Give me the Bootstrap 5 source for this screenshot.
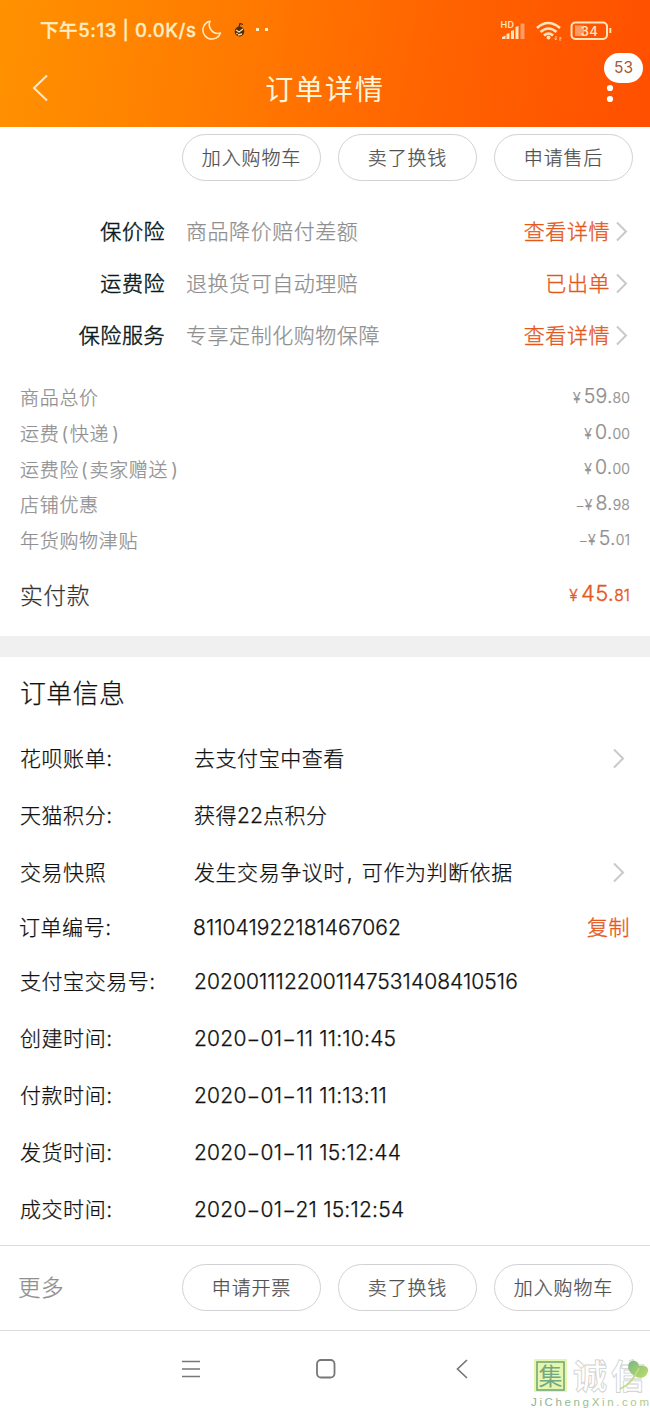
<!DOCTYPE html>
<html lang="zh-CN">
<head>
<meta charset="utf-8">
<meta name="viewport" content="width=device-width, initial-scale=1">
<title>订单详情</title>
<link href="https://cdn.jsdelivr.net/npm/bootstrap@5.3.0/dist/css/bootstrap.min.css" rel="stylesheet">
<style>
body{font-family:Inter,"Noto Sans CJK SC",sans-serif;font-size:21px;line-height:1.2;color:#111;background:#fff;width:650px;height:1408px;overflow:hidden;letter-spacing:.55px;font-weight:300;-webkit-text-stroke:.25px}
.cn{font-family:"Noto Sans CJK SC",sans-serif}
svg{display:block;flex:none;-webkit-text-stroke:0}
.topbar{height:127px;background:linear-gradient(100deg,#ff9200 0%,#ff7900 38%,#ff6200 68%,#ff4f00 100%);color:#fff5dc;-webkit-text-stroke:0}
.status{height:60px;padding:0 38px 0 40px;font-size:18.5px;font-weight:500;letter-spacing:.6px;color:#ffedc4;-webkit-text-stroke:.3px}
.titlebar{height:58px}
.titlebar h1{font-size:28px;letter-spacing:1.9px;font-weight:400}
.count{left:604px;top:53px;width:39px;height:30px;background:#fff;color:#a65a32;font-size:15.5px;font-weight:400;letter-spacing:0}
.pill{width:139px;height:47px;border:1px solid #d2d2d4;border-radius:24px;font-size:19px;letter-spacing:.85px;color:#505050;background:#fff;padding-top:3px}
.svc{height:52px}
.svc .name{width:165px;color:#0b1a20;-webkit-text-stroke:.5px}
.svc .desc{padding-left:21px}
.gray{color:#8f8f8f}
.org{color:#e4581c;-webkit-text-stroke:.35px}
.fee{height:35.6px;font-size:19px;letter-spacing:.7px;color:#8f8f8f}
.fee>span:first-child{padding-top:4px}
.lp{margin:0 1px 0 2px}.rp{margin-left:3px}
.price{font-family:Inter,sans-serif;font-size:14px;letter-spacing:.1px;padding-bottom:2px}
.price b{font-weight:300;font-size:19.5px;letter-spacing:.2px;margin-left:-1px}
.total{height:75px;margin-bottom:3px;font-size:22.8px;color:#333}
.total .price{font-size:15.5px;padding-bottom:5px}.total .price b{font-size:22px}
.band{height:21px;background:#f0f0f0}
.info{height:57.2px;padding-left:20px}
.info .key{width:174px}
.comma{display:inline-block;width:17px;padding-left:2px;letter-spacing:0}
.d{letter-spacing:.05px}
.t{letter-spacing:.22px}
.tools{height:86px;border-top:1px solid #dedede;border-bottom:1px solid #dedede}
.sysnav{height:77px;padding:0 179px 0 181px}
.wm{right:0;bottom:0;width:120px;height:52px;opacity:.9}
</style>
</head>
<body class="position-relative">
<header class="topbar position-relative">
  <div class="status d-flex align-items-center">
    <span class="text-nowrap">下午5:13 | 0.0K/s</span>
    <svg class="ms-1" width="21" height="22" viewBox="0 0 21 22" fill="none" stroke="#ffedc4" stroke-width="1.5"><path d="M9 2.2A9 9 0 1 0 19.4 14A8.7 8.7 0 0 1 9 2.2Z" stroke-linejoin="round"/></svg>
    <svg class="ms-2" width="46" height="22" viewBox="0 0 46 22"><ellipse cx="9.5" cy="12.500" rx="4.800" ry="5" fill="#4b2d11"/><path d="M6 11l3 2 4-3M8 16l4-1M6.500 14l1 1" stroke="#ffdca0" stroke-width="1.3" fill="none"/><path d="M9 8l1-3.500 3 1" stroke="#4b2d11" stroke-width="1.3" fill="none"/><path d="M26 9h3v3h-3zM35 9h3v3h-3z" fill="#ffedc4"/></svg>
    <svg class="ms-auto" width="112" height="26" viewBox="500 16 112 26">
      <text x="500.500" y="26.500" font-family="Inter" font-size="9" font-weight="600" letter-spacing=".3" fill="#ffe4bd">HD</text>
      <path fill="#ffe4bd" d="M502 38v-2l3.500-1.500V38zM506.500 38v-5l3-1v6zM511 38v-8l3-1v9zM515.500 38V26l3-1v13z"/><path d="M520.500 38V22.500h4V38z" fill="#ff9b65"/>
      <g fill="none" stroke="#ffe4bd" stroke-width="2.6"><path d="M537 27q11-10 23 0M540.500 31q8-7 16 0M544 34.500q4.500-4 9 0"/></g><circle cx="548.500" cy="36.500" r="2" fill="#ffe4bd"/>
      <path d="M556 35v4l-1.500-1.500M560 40v-4l1.500 1.500" stroke="#ffc99a" fill="none"/>
      <rect x="571.500" y="21.500" width="35.500" height="16.500" rx="4" fill="none" stroke="#ffe4bd" stroke-width="2"/><rect x="575" y="24.500" width="9" height="10.500" fill="#ff9b65"/><path d="M610.300 27v5" stroke="#ffe4bd" stroke-width="2"/>
      <text x="589.500" y="34.500" text-anchor="middle" font-family="Inter" font-size="13" font-weight="500" fill="#ffe9c9" letter-spacing=".3">34</text>
    </svg>
  </div>
  <div class="titlebar d-flex align-items-center justify-content-between">
    <svg width="60" height="40" viewBox="0 0 60 40" fill="none" stroke="#ffe9c9" stroke-width="2"><path d="M47 6.500L34 19 47 31.500"/></svg>
    <h1 class="m-0 cn">订单详情</h1>
    <svg width="60" height="40" viewBox="0 0 60 40" fill="#fff"><circle cx="20" cy="19" r="3.100"/><circle cx="20" cy="30" r="3.100"/></svg>
  </div>
  <span class="count position-absolute rounded-pill d-flex align-items-center justify-content-center">53</span>
</header>
<main>
  <div class="d-flex justify-content-end" style="gap:17px;padding:7px 17px 25px 0">
    <div class="pill d-flex align-items-center justify-content-center">加入购物车</div><div class="pill d-flex align-items-center justify-content-center">卖了换钱</div><div class="pill d-flex align-items-center justify-content-center">申请售后</div>
  </div>
  <section>
    <div class="svc d-flex align-items-center"><span class="name text-end">保价险</span><span class="gray desc">商品降价赔付差额</span><span class="org ms-auto">查看详情</span><svg width="40" height="24" viewBox="0 0 40 24" fill="none" stroke="#c9c9cc" stroke-width="2"><path d="M7 2.500l9 9-9 9"/></svg></div>
    <div class="svc d-flex align-items-center"><span class="name text-end">运费险</span><span class="gray desc">退换货可自动理赔</span><span class="org ms-auto">已出单</span><svg width="40" height="24" viewBox="0 0 40 24" fill="none" stroke="#c9c9cc" stroke-width="2"><path d="M7 2.500l9 9-9 9"/></svg></div>
    <div class="svc d-flex align-items-center"><span class="name text-end">保险服务</span><span class="gray desc">专享定制化购物保障</span><span class="org ms-auto">查看详情</span><svg width="40" height="24" viewBox="0 0 40 24" fill="none" stroke="#c9c9cc" stroke-width="2"><path d="M7 2.500l9 9-9 9"/></svg></div>
  </section>
  <section style="padding:18px 20px 0">
    <div class="fee d-flex align-items-center justify-content-between"><span>商品总价</span><span class="price">¥ <b>59.</b>80</span></div>
    <div class="fee d-flex align-items-center justify-content-between"><span>运费<span class="lp">(</span>快递<span class="rp">)</span></span><span class="price">¥ <b>0.</b>00</span></div>
    <div class="fee d-flex align-items-center justify-content-between"><span>运费险<span class="lp">(</span>卖家赠送<span class="rp">)</span></span><span class="price">¥ <b>0.</b>00</span></div>
    <div class="fee d-flex align-items-center justify-content-between"><span>店铺优惠</span><span class="price">−¥ <b>8.</b>98</span></div>
    <div class="fee d-flex align-items-center justify-content-between"><span>年货购物津贴</span><span class="price">−¥ <b>5.</b>01</span></div>
    <div class="total d-flex align-items-center justify-content-between"><span>实付款</span><span class="price org">¥ <b>45.</b>81</span></div>
  </section>
  <div class="band"></div>
  <section>
    <div class="d-flex align-items-center" style="height:73px;padding:2px 0 0 20px;font-size:25.800px">订单信息</div>
    <div class="info d-flex align-items-center"><span class="key">花呗账单:</span><span>去支付宝中查看</span><svg class="ms-auto" width="40" height="24" viewBox="0 0 40 24" fill="none" stroke="#c9c9cc" stroke-width="2"><path d="M4 2.500l9 9-9 9"/></svg></div>
    <div class="info d-flex align-items-center"><span class="key">天猫积分:</span><span>获得<span class="d">22</span>点积分</span></div>
    <div class="info d-flex align-items-center"><span class="key">交易快照</span><span>发生交易争议时<span class="comma">,</span>可作为判断依据</span><svg class="ms-auto" width="40" height="24" viewBox="0 0 40 24" fill="none" stroke="#c9c9cc" stroke-width="2"><path d="M4 2.500l9 9-9 9"/></svg></div>
    <div class="info d-flex align-items-center" style="height:51.500px;padding-left:19px"><span class="key">订单编号:</span><span class="d">811041922181467062</span><span class="org ms-auto" style="padding-right:20px">复制</span></div>
    <div class="info d-flex align-items-center" style="height:56.500px"><span class="key">支付宝交易号:</span><span class="d">2020011122001147531408410516</span></div>
    <div class="info d-flex align-items-center"><span class="key">创建时间:</span><span class="t">2020−01−11 11:10:45</span></div>
    <div class="info d-flex align-items-center"><span class="key">付款时间:</span><span class="t">2020−01−11 11:13:11</span></div>
    <div class="info d-flex align-items-center"><span class="key">发货时间:</span><span class="t">2020−01−11 15:12:44</span></div>
    <div class="info d-flex align-items-center"><span class="key">成交时间:</span><span class="t">2020−01−21 15:12:54</span></div>
  </section>
</main>
<footer style="padding-top:6.600px">
  <div class="tools d-flex align-items-center" style="gap:17px;padding:0 17px 0 18px"><span class="gray me-auto" style="font-size:22.500px">更多</span>
    <div class="pill d-flex align-items-center justify-content-center">申请开票</div><div class="pill d-flex align-items-center justify-content-center">卖了换钱</div><div class="pill d-flex align-items-center justify-content-center">加入购物车</div>
  </div>
  <nav class="sysnav d-flex align-items-center justify-content-between">
    <svg width="20" height="20" viewBox="0 0 20 20" stroke="#777" stroke-width="1.7"><path d="M1 2.500h18M1 10h18M1 17.500h18"/></svg>
    <svg width="20" height="20" viewBox="0 0 20 20" fill="none" stroke="#777" stroke-width="1.800"><rect x="1" y="1" width="17.500" height="17.500" rx="4"/></svg>
    <svg width="20" height="20" viewBox="0 0 20 20" fill="none" stroke="#777" stroke-width="1.700"><path d="M16 1L6.500 10l9.500 9"/></svg>
  </nav>
</footer>
<svg class="wm position-absolute" viewBox="530 1356 120 52">
  <defs><linearGradient id="g1"><stop stop-color="#73a98a"/><stop offset="1" stop-color="#a9c77b"/></linearGradient><linearGradient id="g2" x2="1" y2="1"><stop stop-color="#6fae7c"/><stop offset="1" stop-color="#b5dd54"/></linearGradient></defs>
  <rect x="534" y="1359" width="33" height="33" fill="#e4f6a5"/><rect x="537" y="1362" width="27" height="28" fill="none" stroke="#6ca474" stroke-width="1.700"/>
  <text x="550.500" y="1385" text-anchor="middle" font-family="Noto Sans CJK SC" font-size="24" font-weight="400" letter-spacing="0" fill="#62a078">集</text>
  <text x="573" y="1389" font-family="Noto Sans CJK SC" font-size="34" font-weight="700" letter-spacing="4" fill="#fff" stroke="#ccc" stroke-width=".8">诚<tspan letter-spacing="0">信</tspan></text>
  <path d="M635 1376c-11-6-7-17 0-15 4 1 4 5 4 5s10-2 9 5c-1 6-7 9-13 5z" fill="url(#g2)"/><path d="M639 1368q-7 16-19 21" fill="none" stroke="#b8d875" stroke-width="1.800"/>
  <text x="531" y="1406" font-family="Liberation Sans" font-size="11.500" font-weight="400" textLength="118" lengthAdjust="spacing" letter-spacing="0" fill="url(#g1)">JiChengXin.com</text>
</svg>
<script src="https://cdn.jsdelivr.net/npm/bootstrap@5.3.0/dist/js/bootstrap.bundle.min.js"></script>
</body>
</html>
